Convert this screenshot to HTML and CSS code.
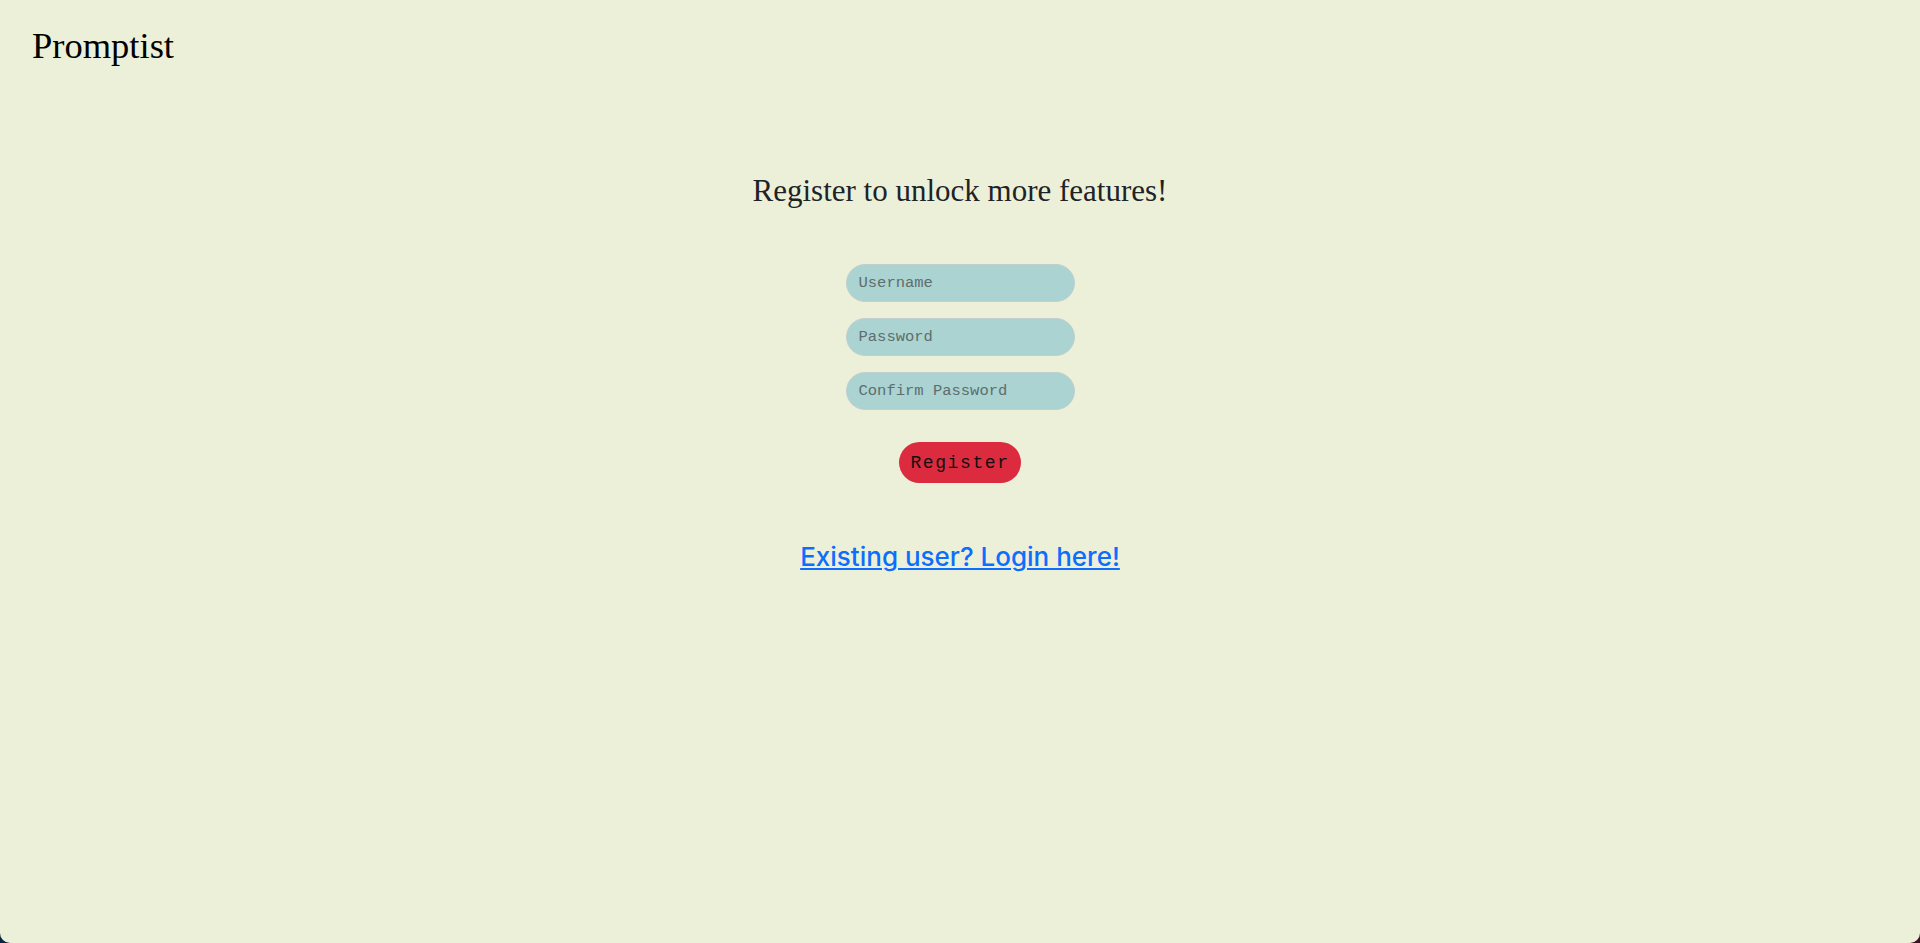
FILE: index.html
```html
<!DOCTYPE html>
<html lang="en">
<head>
<meta charset="utf-8">
<title>Promptist - Register</title>
<link rel="stylesheet" href="styles.css">
</head>
<body>
<div class="window">
  <header class="topbar">
    <div class="brand">Promptist</div>
  </header>
  <main class="content">
    <h1 class="title">Register to unlock more features!</h1>
    <form class="form">
      <input class="field" type="text" placeholder="Username">
      <input class="field" type="password" placeholder="Password">
      <input class="field" type="password" placeholder="Confirm Password">
      <button class="btn" type="button">Register</button>
    </form>
    <a class="login" href="#">Existing user? Login here!</a>
  </main>
</div>
</body>
</html>
```
FILE: styles.css
```css
html {
  background: linear-gradient(90deg, #0a2742 0%, #1a1f33 50%, #3b1222 100%);
  height: 100%;
}
body {
  margin: 0;
  height: 100%;
}
.window {
  background: #ecf0d8;
  height: 943px;
  box-sizing: border-box;
  border-radius: 0 0 10px 10px;
  display: flex;
  flex-direction: column;
}
.topbar {
  padding: 26px 32px 0;
}
.brand {
  font-family: "Liberation Serif", serif;
  font-size: 36.5px;
  color: #000;
  line-height: 40px;
}
.content {
  display: flex;
  flex-direction: column;
  align-items: center;
}
.title {
  margin: 108px 0 0;
  font-family: "Liberation Serif", serif;
  font-weight: normal;
  font-size: 31px;
  line-height: 34px;
  color: #1e2326;
}
.form {
  margin-top: 56px;
  display: flex;
  flex-direction: column;
  align-items: center;
  gap: 16px;
}
.field {
  width: 229px;
  height: 38px;
  box-sizing: border-box;
  border: 1px solid #c2cfd0;
  border-radius: 19px;
  background: #aad3d1;
  padding: 0 12px;
  font-family: "Liberation Mono", monospace;
  font-size: 15.5px;
  color: #333;
  outline: none;
}
.field::placeholder {
  color: #5e6d6e;
}
.btn {
  margin-top: 16px;
  width: 122px;
  height: 41px;
  border: none;
  border-radius: 20.5px;
  background: #dc2a3e;
  color: #111;
  font-family: "Liberation Mono", monospace;
  font-size: 18px;
  letter-spacing: 1.6px;
  padding: 0;
}
.login {
  margin-top: 57px;
  font-family: Inter, "Noto Sans", sans-serif;
  font-size: 26px;
  font-weight: 500;
  line-height: 34px;
  color: #0d6efd;
  text-decoration: underline;
  text-underline-offset: 2px;
  text-decoration-thickness: 2px;
}
```
